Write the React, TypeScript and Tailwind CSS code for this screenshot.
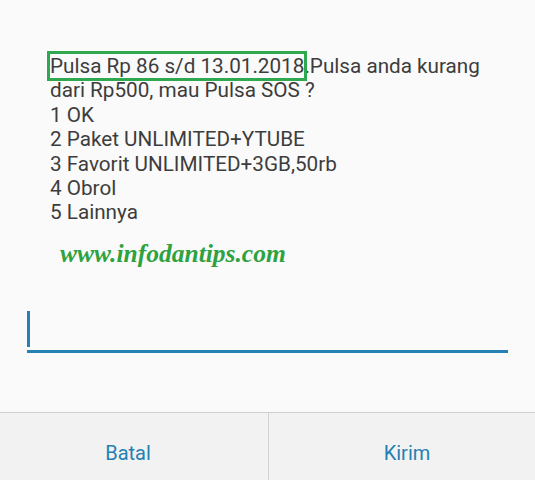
import React from 'react'

const LINES = ['1 OK', '2 Paket UNLIMITED+YTUBE', '3 Favorit UNLIMITED+3GB,50rb', '4 Obrol', '5 Lainnya']

export default function App() {
  return (
    <div className="flex h-[480px] w-[535px] flex-col bg-[#fafafa] font-['Roboto',sans-serif]">
      {/* USSD message */}
      <div className="pl-[50px] pr-[20px] pt-[54px] text-[20.7px] leading-[24.4px] text-[#3d3d3d]">
        <p>
          <span className="outline-[3px] outline-offset-0 outline-[#2fa84f] outline-solid">
            Pulsa Rp 86 s/d 13.01.2018
          </span>
          .Pulsa anda kurang dari Rp500, mau Pulsa SOS ?
        </p>
        {LINES.map((l) => (
          <p key={l}>{l}</p>
        ))}
      </div>

      {/* watermark */}
      <div className="mt-[14px] pl-[60px] font-['Liberation_Serif',serif] text-[25.5px] font-bold italic leading-[30px] text-[#2ea23f]">
        www.infodantips.com
      </div>

      {/* input */}
      <div className="mx-[27px] mt-[42px] flex h-[42px] items-start border-b-[3px] border-[#2580b3]">
        <div className="h-[36px] w-[3px] bg-[#2580b3]" />
      </div>

      <div className="flex-1" />

      {/* buttons */}
      <div className="flex h-[68px] border-t border-[#cfcfcf] bg-[#f2f2f2] text-[20px] text-[#2580b3]">
        <button className="flex flex-1 items-center justify-center pt-[12px] pr-[12px]">Batal</button>
        <div className="w-px bg-[#d2d2d2]" />
        <button className="flex flex-1 items-center justify-center pt-[12px] pl-[10px]">Kirim</button>
      </div>
    </div>
  )
}
